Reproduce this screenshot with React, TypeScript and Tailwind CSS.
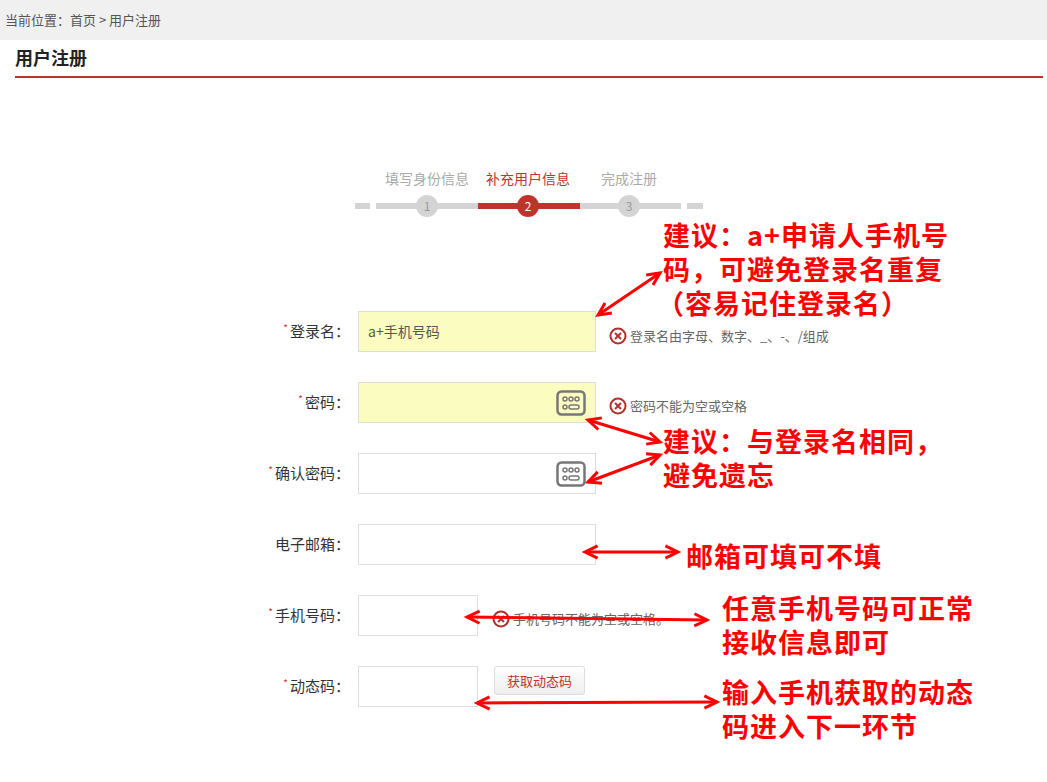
import React from "react";

const F = { fontFamily: '"Noto Sans CJK SC", "Liberation Sans", sans-serif' };

function Kbd() {
  return (
    <svg width="30" height="26" viewBox="0 0 30 26">
      <rect x="1.5" y="1.5" width="27" height="23" rx="4" fill="none" stroke="#777" strokeWidth="2.5" />
      <circle cx="9" cy="9" r="2" fill="none" stroke="#777" strokeWidth="1.5" />
      <circle cx="15" cy="9" r="2" fill="none" stroke="#777" strokeWidth="1.5" />
      <circle cx="21" cy="9" r="2" fill="none" stroke="#777" strokeWidth="1.5" />
      <circle cx="9" cy="17" r="2" fill="none" stroke="#777" strokeWidth="1.5" />
      <rect x="13" y="15" width="10" height="4" rx="2" fill="none" stroke="#777" strokeWidth="1.5" />
    </svg>
  );
}

function Err() {
  return (
    <svg width="18" height="18" viewBox="0 0 18 18" className="shrink-0">
      <circle cx="9" cy="9" r="7.5" fill="#fff" stroke="#b3302c" strokeWidth="2" />
      <path d="M6 6l6 6M12 6l-6 6" stroke="#b3302c" strokeWidth="2" />
    </svg>
  );
}

function Row({ req, label, wide = true, bg = "bg-white", icon = false, text, children }: any) {
  return (
    <div className="flex items-center h-[41px] mb-[30px]">
      <div className="w-[358px] pr-[8px] text-right text-[15px] text-[#333]">
        {req && <span className="text-[#c33] text-[10px] align-top mr-[2px]">*</span>}
        {label}
      </div>
      <div className={`${wide ? "w-[238px]" : "w-[120px]"} h-[41px] border border-[#ddd] ${bg} flex items-center justify-between px-[9px] text-[14px] text-[#555]`}>
        <span>{text}</span>
        {icon && <Kbd />}
      </div>
      {children}
    </div>
  );
}

function Arrow({ x1, y1, x2, y2 }: any) {
  const head = (ax: number, ay: number, bx: number, by: number) => {
    const a = Math.atan2(by - ay, bx - ax);
    const l = 14;
    const p1 = [bx - l * Math.cos(a - 0.45), by - l * Math.sin(a - 0.45)];
    const p2 = [bx - l * Math.cos(a + 0.45), by - l * Math.sin(a + 0.45)];
    return `M${p1[0]} ${p1[1]}L${bx} ${by}L${p2[0]} ${p2[1]}`;
  };
  return (
    <g stroke="#f00" strokeWidth="3" fill="none">
      <line x1={x1} y1={y1} x2={x2} y2={y2} />
      <path d={head(x1, y1, x2, y2)} />
      <path d={head(x2, y2, x1, y1)} />
    </g>
  );
}

function Step({ n, active }: any) {
  return (
    <div className={`w-[22px] h-[22px] rounded-full flex items-center justify-center text-[12px] ${active ? "bg-[#c0322a] text-white" : "bg-[#d4d4d4] text-[#999]"}`}>
      {n}
    </div>
  );
}

export default function App() {
  const ann = "absolute text-[#f00] font-bold text-[27px] tracking-[1px] leading-[34px] whitespace-nowrap";
  return (
    <div className="relative w-[1047px] h-[782px] bg-white overflow-hidden" style={F}>
      <div className="h-[40px] bg-[#f0f0f0] flex items-center px-[5px] text-[13px] text-[#555]">当前位置：首页 &gt; 用户注册</div>
      <div className="ml-[15px] mr-[4px] h-[38px] border-b-2 border-[#c0322a] flex items-end pb-[5px] text-[18px] font-bold text-[#222]">用户注册</div>

      <div className="ml-[355px] mt-[88px] w-[348px]">
        <div className="flex text-[14px] h-[24px] items-center whitespace-nowrap">
          <div className="w-[84px] text-center ml-[30px] text-[#aaa]">填写身份信息</div>
          <div className="w-[84px] text-center ml-[17px] text-[#c0322a]">补充用户信息</div>
          <div className="w-[60px] text-center ml-[29px] text-[#aaa]">完成注册</div>
        </div>
        <div className="relative h-[22px] mt-[5px]">
          <div className="absolute top-[8px] left-0 w-[15px] h-[6px] bg-[#d4d4d4]" />
          <div className="absolute top-[8px] left-[21px] w-[102px] h-[6px] bg-[#d4d4d4]" />
          <div className="absolute top-[8px] left-[123px] w-[102px] h-[6px] bg-[#c0322a]" />
          <div className="absolute top-[8px] left-[225px] w-[101px] h-[6px] bg-[#d4d4d4]" />
          <div className="absolute top-[8px] left-[332px] w-[16px] h-[6px] bg-[#d4d4d4]" />
          <div className="absolute left-[61px] top-0"><Step n={1} /></div>
          <div className="absolute left-[162px] top-0"><Step n={2} active /></div>
          <div className="absolute left-[263px] top-0"><Step n={3} /></div>
        </div>
      </div>

      <div className="mt-[94px]">
        <Row req label="登录名：" bg="bg-[#fafcc0]" text="a+手机号码">
          <div className="flex items-center gap-[3px] ml-[13px] text-[13px] text-[#666] mt-[8px]"><Err />登录名由字母、数字、_、-、/组成</div>
        </Row>
        <Row req label="密码：" bg="bg-[#fafcc0]" icon>
          <div className="flex items-center gap-[3px] ml-[13px] text-[13px] text-[#666] mt-[6px]"><Err />密码不能为空或空格</div>
        </Row>
        <Row req label="确认密码：" icon />
        <Row label="电子邮箱：" />
        <Row req label="手机号码：" wide={false}>
          <div className="flex items-center gap-[3px] ml-[14px] text-[13px] text-[#666] mt-[6px]"><Err />手机号码不能为空或空格。</div>
        </Row>
        <Row req label="动态码：" wide={false}>
          <button className="ml-[16px] mt-[-12px] w-[91px] h-[29px] rounded-[3px] border border-[#ddd] bg-gradient-to-b from-white to-[#eee] text-[13px] text-[#c0322a]">获取动态码</button>
        </Row>
      </div>

      <svg className="absolute left-0 top-0 pointer-events-none" width="1047" height="782">
        <Arrow x1={598} y1={315} x2={660} y2={273} />
        <Arrow x1={588} y1={420} x2={660} y2={442} />
        <Arrow x1={588} y1={482} x2={660} y2={455} />
        <Arrow x1={585} y1={552} x2={678} y2={552} />
        <Arrow x1={467} y1={617} x2={707} y2={620} />
        <Arrow x1={477} y1={703} x2={717} y2={702} />
      </svg>
      <div className={ann} style={{ left: 663, top: 218 }}>建议：a+申请人手机号<br />码，可避免登录名重复<br /><span className="ml-[-6px]">（容易记住登录名）</span></div>
      <div className={ann} style={{ left: 663, top: 424 }}>建议：与登录名相同，<br />避免遗忘</div>
      <div className={ann} style={{ left: 686, top: 539 }}>邮箱可填可不填</div>
      <div className={ann} style={{ left: 722, top: 591 }}>任意手机号码可正常<br />接收信息即可</div>
      <div className={ann} style={{ left: 722, top: 675 }}>输入手机获取的动态<br />码进入下一环节</div>
    </div>
  );
}
